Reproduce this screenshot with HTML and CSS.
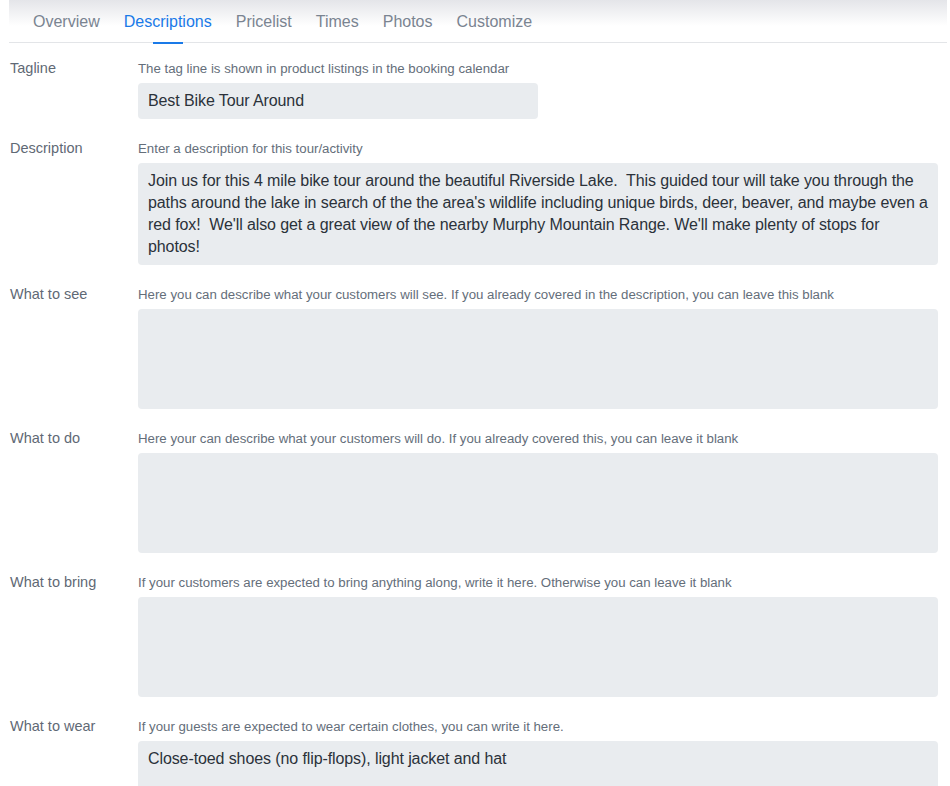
FILE: index.html
```html
<!DOCTYPE html>
<html lang="en">

<head>
    <meta charset="UTF-8" />
    <meta name="viewport" content="width=device-width, initial-scale=1.0" />
    <title>Tour descriptions</title>
    <link rel="stylesheet" href="styles.css">
</head>

<body>
    <div class="top-shade"></div>
    <nav class="tabs">
        <a class="tab">Overview</a>
        <a class="tab active">Descriptions</a>
        <a class="tab">Pricelist</a>
        <a class="tab">Times</a>
        <a class="tab">Photos</a>
        <a class="tab">Customize</a>
    </nav>

    <main class="form">
        <div class="row">
            <label class="label">Tagline</label>
            <div class="field">
                <p class="help">The tag line is shown in product listings in the booking calendar</p>
                <input class="input tagline" type="text" value="Best Bike Tour Around" />
            </div>
        </div>

        <div class="row">
            <label class="label">Description</label>
            <div class="field">
                <p class="help">Enter a description for this tour/activity</p>
                <textarea class="input area desc" rows="4">Join us for this 4 mile bike tour around the beautiful Riverside Lake.  This guided tour will take you through the
paths around the lake in search of the the area's wildlife including unique birds, deer, beaver, and maybe even a
red fox!  We'll also get a great view of the nearby Murphy Mountain Range. We'll make plenty of stops for
photos!</textarea>
            </div>
        </div>

        <div class="row">
            <label class="label">What to see</label>
            <div class="field">
                <p class="help">Here you can describe what your customers will see. If you already covered in the description, you can leave this blank</p>
                <textarea class="input area"></textarea>
            </div>
        </div>

        <div class="row">
            <label class="label">What to do</label>
            <div class="field">
                <p class="help">Here your can describe what your customers will do. If you already covered this, you can leave it blank</p>
                <textarea class="input area"></textarea>
            </div>
        </div>

        <div class="row">
            <label class="label">What to bring</label>
            <div class="field">
                <p class="help">If your customers are expected to bring anything along, write it here. Otherwise you can leave it blank</p>
                <textarea class="input area"></textarea>
            </div>
        </div>

        <div class="row">
            <label class="label">What to wear</label>
            <div class="field">
                <p class="help">If your guests are expected to wear certain clothes, you can write it here.</p>
                <textarea class="input area">Close-toed shoes (no flip-flops), light jacket and hat</textarea>
            </div>
        </div>
    </main>
</body>

</html>
```

FILE: styles.css
```css
* {
    margin: 0px;
    padding: 0px;
    box-sizing: border-box;
}

body {
    background: #fff;
    font-family: "Liberation Sans", Arial, sans-serif;
    color: #343a40;
    margin: 0 3px 0 9px;
    position: relative;
}

.top-shade {
    position: absolute;
    top: 0;
    left: -9px;
    right: -3px;
    height: 26px;
    background: linear-gradient(to bottom, #e4e5e9, rgba(255, 255, 255, 0));
    pointer-events: none;
}

.tabs {
    display: flex;
    padding-left: 12px;
    border-bottom: 1px solid #e3e5e8;
    position: relative;
}

.tab {
    padding: 12px 12px 11px;
    font-size: 16px;
    line-height: 19px;
    color: #7a8491;
    position: relative;
    cursor: pointer;
}

.tab.active {
    color: #1a7ae8;
}

.tab.active::after {
    content: "";
    position: absolute;
    left: 50%;
    bottom: -2px;
    width: 30px;
    height: 2px;
    margin-left: -15px;
    background: #1a7ae8;
}

.form {
    display: flex;
    flex-direction: column;
    padding-top: 16px;
}

.row {
    display: flex;
    margin-bottom: 20px;
}

.label {
    width: 129px;
    flex-shrink: 0;
    font-size: 14.5px;
    line-height: 19px;
    color: #5f6975;
    padding-left: 1px;
}

.field {
    flex: 1;
    display: flex;
    flex-direction: column;
}

.help {
    font-size: 13.25px;
    line-height: 19px;
    color: #646e7a;
    margin-bottom: 5px;
}

.input {
    border: none;
    outline: none;
    background: #e9ecef;
    border-radius: 4px;
    font-family: "Liberation Sans", Arial, sans-serif;
    font-size: 16px;
    letter-spacing: -0.1px;
    color: #2b323a;
    padding: 7px 10px;
}

.tagline {
    width: 400px;
    height: 36px;
}

.area {
    width: 800px;
    height: 100px;
    line-height: 22px;
    resize: none;
    overflow: hidden;
    white-space: pre;
}

.desc {
    height: 102px;
}
```
